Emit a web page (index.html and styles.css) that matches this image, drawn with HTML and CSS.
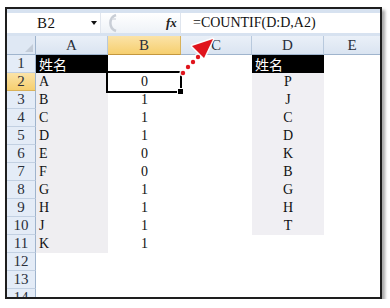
FILE: index.html
```html
<!DOCTYPE html>
<html>
<head>
<meta charset="utf-8">
<link rel="stylesheet" href="styles.css">
</head>
<body>
<div class="window">
  <div class="topstrip"></div>
  <div class="fbar">
    <div class="namebox"><span class="ref">B2</span><span class="dd"></span></div>
    <div class="mid">
      <svg class="grip" width="14" height="20" viewBox="0 0 14 20"><path d="M11 2 A8.5 8.5 0 0 0 11 18" fill="none" stroke="#c9ced6" stroke-width="2.5"/><path d="M7 6 h4" stroke="#d6dae0" stroke-width="1.5"/></svg>
      <span class="fx">fx</span>
    </div>
    <div class="formula">=COUNTIF(D:D,A2)</div>
  </div>
  <div class="gap"></div>
  <div class="sheet">
    <div class="corner"><span class="tri"></span></div>
    <div class="ch">A</div><div class="ch sel">B</div><div class="ch">C</div><div class="ch">D</div><div class="ch last">E</div>

    <div class="rh">1</div><div class="c name">姓名</div><div class="c"></div><div class="c"></div><div class="c name">姓名</div><div class="c"></div>
    <div class="rh sel">2</div><div class="c fa">A</div><div class="c ctr active">0</div><div class="c"></div><div class="c fd ctr">P</div><div class="c"></div>
    <div class="rh">3</div><div class="c fa">B</div><div class="c ctr">1</div><div class="c"></div><div class="c fd ctr">J</div><div class="c"></div>
    <div class="rh">4</div><div class="c fa">C</div><div class="c ctr">1</div><div class="c"></div><div class="c fd ctr">C</div><div class="c"></div>
    <div class="rh">5</div><div class="c fa">D</div><div class="c ctr">1</div><div class="c"></div><div class="c fd ctr">D</div><div class="c"></div>
    <div class="rh">6</div><div class="c fa">E</div><div class="c ctr">0</div><div class="c"></div><div class="c fd ctr">K</div><div class="c"></div>
    <div class="rh">7</div><div class="c fa">F</div><div class="c ctr">0</div><div class="c"></div><div class="c fd ctr">B</div><div class="c"></div>
    <div class="rh">8</div><div class="c fa">G</div><div class="c ctr">1</div><div class="c"></div><div class="c fd ctr">G</div><div class="c"></div>
    <div class="rh">9</div><div class="c fa">H</div><div class="c ctr">1</div><div class="c"></div><div class="c fd ctr">H</div><div class="c"></div>
    <div class="rh">10</div><div class="c fa">J</div><div class="c ctr">1</div><div class="c"></div><div class="c fd ctr">T</div><div class="c"></div>
    <div class="rh">11</div><div class="c fa">K</div><div class="c ctr">1</div><div class="c"></div><div class="c"></div><div class="c"></div>
    <div class="rh">12</div><div class="c"></div><div class="c"></div><div class="c"></div><div class="c"></div><div class="c"></div>
    <div class="rh">13</div><div class="c"></div><div class="c"></div><div class="c"></div><div class="c"></div><div class="c"></div>
    <div class="rh">14</div><div class="c"></div><div class="c"></div><div class="c"></div><div class="c"></div><div class="c"></div>
  </div>
  <svg class="arrow" width="50" height="50" viewBox="0 0 50 50">
    <g fill="#ffffff" opacity="0.9">
      <circle cx="6" cy="38" r="3.6"/><circle cx="11" cy="32" r="3.6"/><circle cx="16" cy="27" r="3.6"/><circle cx="21" cy="22" r="3.6"/>
      <polygon points="36,4 15,11 27,23" stroke="#fff" stroke-width="3" stroke-linejoin="round"/>
    </g>
    <g fill="#e0141c">
      <circle cx="6" cy="38" r="2.2"/><circle cx="11" cy="32" r="2.2"/><circle cx="16" cy="27" r="2.2"/><circle cx="21" cy="22" r="2.2"/>
      <polygon points="36,4 15,11 27,23"/>
    </g>
  </svg>
</div>
</body>
</html>
```
FILE: styles.css
```css
html, body {
  margin: 0;
  padding: 0;
  background: #ffffff;
}
body {
  font-family: "Liberation Serif", "DejaVu Serif", serif;
}
.window {
  position: relative;
  box-sizing: border-box;
  width: 377px;
  height: 292px;
  margin: 7px 0 0 5px;
  border: 2px solid #1e1e1e;
  overflow: hidden;
  background: #ffffff;
  box-shadow: 3px 3px 3px rgba(0, 0, 0, 0.35);
}
.topstrip {
  height: 4px;
  background: #d7e2f0;
}
.fbar {
  display: flex;
  height: 20px;
  background: #f3f5f8;
}
.namebox {
  width: 93px;
  display: flex;
  align-items: center;
  background: #ffffff;
  border-right: 1px solid #e1e6ee;
}
.ref {
  margin-left: 30px;
  font-size: 15px;
  letter-spacing: 0.5px;
  color: #111;
  flex: 1;
}
.dd {
  width: 0;
  height: 0;
  border-left: 3.5px solid transparent;
  border-right: 3.5px solid transparent;
  border-top: 4px solid #111;
  margin-right: 3px;
}
.mid {
  width: 79px;
  display: flex;
  align-items: center;
  background: linear-gradient(#ffffff, #eef2f7);
}
.grip {
  margin-left: 4px;
}
.fx {
  margin-left: 47px;
  font-family: "Liberation Serif", serif;
  font-style: italic;
  font-weight: bold;
  font-size: 13px;
  color: #222;
}
.formula {
  flex: 1;
  background: #ffffff;
  border-left: 1px solid #dfe5ee;
  padding-left: 12px;
  font-size: 14px;
  line-height: 20px;
  color: #111;
}
.gap {
  height: 3px;
  background: #d7e2f0;
}
.sheet {
  display: grid;
  grid-template-columns: 29px 72px 73px 71px 72px 1fr;
  grid-template-rows: 19px;
  grid-auto-rows: 18px;
}
.corner {
  position: relative;
  background: #dfe8f4;
  border-right: 1px solid #9fb4cd;
  border-bottom: 1px solid #9fb4cd;
}
.tri {
  position: absolute;
  right: 2px;
  bottom: 2px;
  width: 0;
  height: 0;
  border-left: 8px solid transparent;
  border-bottom: 8px solid #c3ccd8;
}
.ch {
  box-sizing: border-box;
  background: linear-gradient(#eaf0f8, #dae4f1);
  border-right: 1px solid #b8c9dd;
  border-bottom: 1px solid #9fb4cd;
  text-align: center;
  font-size: 15px;
  line-height: 18px;
  color: #2a2f3a;
}
.ch.last {
  border-right: none;
}
.ch.sel {
  background: linear-gradient(#fbe3a8, #f6cf6f);
  border-right-color: #d9b25a;
  border-bottom-color: #c4973e;
}
.rh {
  box-sizing: border-box;
  background: #e4ecf7;
  border-right: 1px solid #9fb4cd;
  border-bottom: 1px solid #c2d0e2;
  text-align: center;
  font-size: 15px;
  line-height: 17px;
  color: #2a2f3a;
}
.rh.sel {
  background: linear-gradient(#fbe3a8, #f6cf6f);
  border-bottom-color: #d9b25a;
}
.c {
  box-sizing: border-box;
  font-size: 14px;
  line-height: 18px;
  color: #111;
  padding-left: 3px;
  white-space: nowrap;
}
.ctr {
  text-align: center;
  padding-left: 0;
}
.fa {
  background: #efeef1;
}
.fd {
  background: #f0eff3;
}
.name {
  background: #000000;
  color: #ffffff;
  font-family: "Noto Sans CJK SC", sans-serif;
  font-size: 14px;
  line-height: 18px;
  padding-left: 3px;
}
.active {
  position: relative;
}
.active::after {
  content: "";
  position: absolute;
  left: -2px;
  top: -2px;
  right: -1px;
  bottom: -2px;
  border: 2px solid #000;
}
.active::before {
  content: "";
  position: absolute;
  right: -3px;
  bottom: -4px;
  width: 5px;
  height: 5px;
  background: #000;
  border: 1px solid #fff;
  z-index: 1;
}
.arrow {
  position: absolute;
  left: 170px;
  top: 26px;
}
```
